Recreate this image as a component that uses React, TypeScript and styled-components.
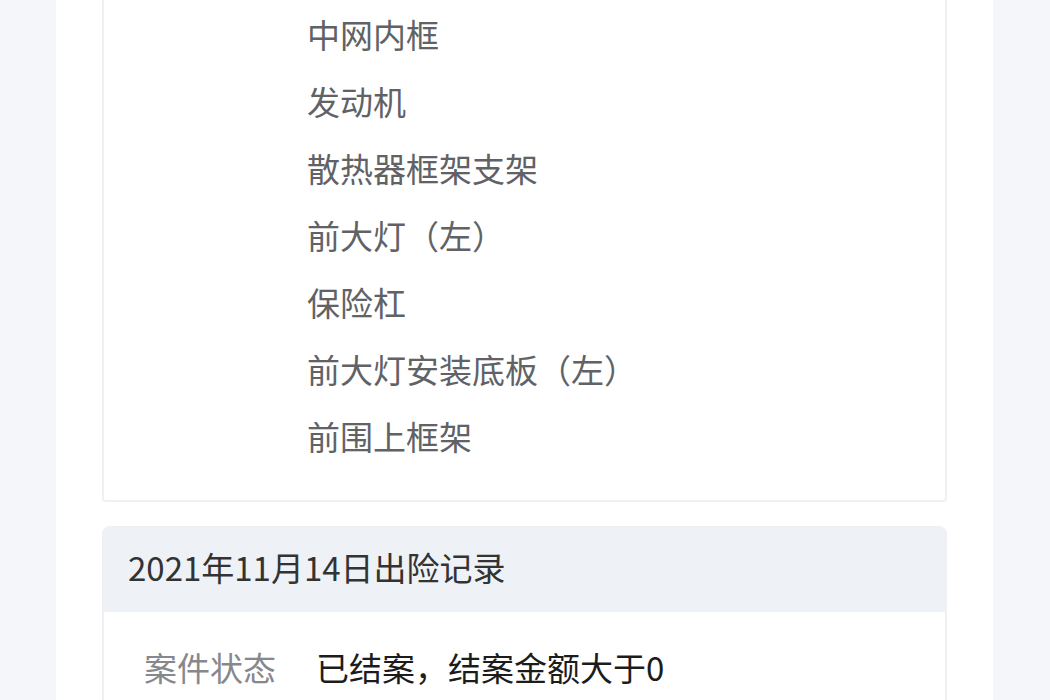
import React from "react";
import styled, { createGlobalStyle } from "styled-components";

const Global = createGlobalStyle`
  html, body {
    margin: 0;
    padding: 0;
    background: #f5f6fa;
    font-family: "Noto Sans CJK SC", "Noto Sans", sans-serif;
  }
  #root { min-height: 700px; }
`;

const Page = styled.div`
  display: flex;
  justify-content: center;
  min-height: 700px;
  padding: 0 57px 0 56px;
  box-sizing: border-box;
  width: 1050px;
`;

const Panel = styled.main`
  flex: 1;
  background: #ffffff;
  padding: 0 46px;
  display: flex;
  flex-direction: column;
  gap: 24px;
  min-height: 700px;
`;

const Card = styled.section<{ $openTop?: boolean }>`
  border: 2px solid #eef0f3;
  border-top: ${(p) => (p.$openTop ? "none" : "2px solid #eef0f3")};
  border-radius: ${(p) => (p.$openTop ? "0 0 4px 4px" : "8px 8px 0 0")};
  background: #fff;
  overflow: hidden;
`;

const PartsGrid = styled.div`
  display: grid;
  grid-template-columns: 203px 1fr;
  padding: 1px 0 30px;
`;

const PartsList = styled.ul`
  grid-column: 2;
  list-style: none;
  margin: 0;
  padding: 0;
`;

const PartItem = styled.li`
  height: 67px;
  line-height: 67px;
  font-size: 33px;
  color: #606266;
  white-space: nowrap;
`;

const CardHeader = styled.header`
  height: 86px;
  box-sizing: border-box;
  background: #eef1f6;
  display: flex;
  align-items: center;
  padding: 0 26px 5px;
  font-size: 33px;
  color: #333333;
  margin: -2px -2px 0;
  border-radius: 8px 8px 0 0;
`;

const Row = styled.div`
  display: flex;
  align-items: center;
  padding: 35px 40px;
  gap: 40px;
  font-size: 33px;
  line-height: 40px;
`;

const Label = styled.span`
  color: #86888c;
  white-space: nowrap;
`;

const Value = styled.span`
  color: #1c1c1c;
  white-space: nowrap;
`;

const parts = [
  "中网内框",
  "发动机",
  "散热器框架支架",
  "前大灯（左）",
  "保险杠",
  "前大灯安装底板（左）",
  "前围上框架",
];

export default function App() {
  return (
    <>
      <Global />
      <Page>
        <Panel>
          <Card $openTop>
            <PartsGrid>
              <PartsList>
                {parts.map((p) => (
                  <PartItem key={p}>{p}</PartItem>
                ))}
              </PartsList>
            </PartsGrid>
          </Card>
          <Card>
            <CardHeader>2021年11月14日出险记录</CardHeader>
            <Row>
              <Label>案件状态</Label>
              <Value>已结案，结案金额大于0</Value>
            </Row>
          </Card>
        </Panel>
      </Page>
    </>
  );
}
